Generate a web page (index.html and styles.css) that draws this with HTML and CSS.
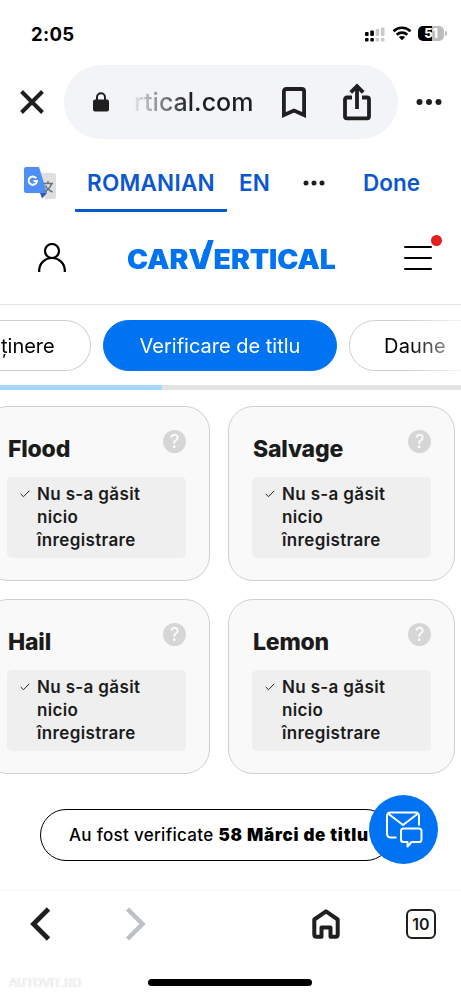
FILE: index.html
```html
<!DOCTYPE html>
<html lang="ro">
<head>
<meta charset="utf-8">
<title>carVertical</title>
<link rel="stylesheet" href="styles.css">
</head>
<body>
<div class="status">
  <span class="time">2:05</span>
  <svg class="signal" width="20" height="16" viewBox="0 0 20 16"><g fill="#000"><rect x="0" y="6" width="3.600" height="4" rx="1"/><rect x="5.300" y="4.400" width="3.600" height="5.600" rx="1"/><rect x="0" y="12" width="3.600" height="3.400" rx="1"/><rect x="5.300" y="12" width="3.600" height="3.400" rx="1"/></g><g fill="#c9c9c9"><rect x="10.600" y="3" width="3.600" height="7" rx="1"/><rect x="15.900" y="1.500" width="3.600" height="8.500" rx="1"/><rect x="10.600" y="12" width="3.600" height="3.400" rx="1"/><rect x="15.900" y="12" width="3.600" height="3.400" rx="1"/></g></svg>
  <svg class="wifi" width="20" height="15" viewBox="0 0 20 15" fill="none" stroke="#000" stroke-width="2.600"><path d="M1.500 5.200C6.200.6 13.800.6 18.500 5.200M4.700 8.700C7.700 5.900 12.300 5.900 15.300 8.700"/><path d="M10 14.300 6.800 11.100Q10 8.700 13.200 11.100Z" fill="#000" stroke="none"/></svg>
  <span class="battery">51</span><i class="nub"></i>
</div>

<div class="browser">
  <svg class="close" width="24" height="24" viewBox="0 0 24 24" fill="none" stroke="#1f1f1f" stroke-width="3.900"><path d="M1.500 1.500 22.500 22.500M22.500 1.500 1.500 22.500"/></svg>
  <div class="address">
    <svg class="lock" width="16" height="20" viewBox="0 0 16 20"><rect y="7.500" width="16" height="12" rx="2" fill="#1f1f1f"/><path d="M4 8V5.200a4 4 0 0 1 8 0V8" fill="none" stroke="#1f1f1f" stroke-width="2"/></svg>
    <span class="domain">rtical.com</span>
    <svg class="bookmark" width="24" height="32" viewBox="0 0 24 32" fill="none" stroke="#1f1f1f" stroke-width="3.800"><path d="M1.900 28V4.500Q1.900 2 4.400 2H19.600Q22.100 2 22.100 4.500V28L12 23.500Z"/></svg>
    <svg class="share" width="28" height="38" viewBox="0 0 28 38" fill="none" stroke="#1f1f1f" stroke-width="3.800"><path d="M9 14.500H4Q2 14.500 2 16.500V33.500Q2 35.300 4 35.300H24Q26 35.300 26 33.500V16.500Q26 14.500 24 14.500H19M14 26V4M7.800 9.300 14 3.100 20.200 9.300"/></svg>
  </div>
  <svg class="more" width="26" height="8" viewBox="0 0 26 8" fill="#1f1f1f"><circle cx="3.500" cy="4" r="3"/><circle cx="13" cy="4" r="3"/><circle cx="22.500" cy="4" r="3"/></svg>
</div>

<div class="translate">
  <svg class="gicon" width="34" height="34" viewBox="0 0 34 34"><path d="M13 6H30Q32 6 32 8V30Q32 32 30 32H21Z" fill="#dfdfdf"/><path d="M16 26H23L18 31.500Z" fill="#3f51b5"/><path d="M2 0H15L23 26H2Q0 26 0 24V2Q0 0 2 0Z" fill="#4f8ef4"/><path d="M12.300 11.300A4.200 4.200 0 1 0 13 14H9.500" fill="none" stroke="#fff" stroke-width="2"/><path d="M19.500 16.500H29M24 14V16.500M27.500 17Q25.500 22 20.500 25M21.500 18.500Q23 22.500 28.500 25" fill="none" stroke="#66747b" stroke-width="1.500"/></svg>
  <span class="lang active">ROMANIAN</span>
  <span class="lang english">EN</span>
  <svg class="dots" width="22" height="6" viewBox="0 0 22 6" fill="#1f1f1f"><circle cx="3" cy="3" r="2.500"/><circle cx="11" cy="3" r="2.500"/><circle cx="19" cy="3" r="2.500"/></svg>
  <span class="done">Done</span>
</div>

<header class="site">
  <svg class="user" width="28" height="30" viewBox="0 0 28 30" fill="none" stroke="#000" stroke-width="2.200"><circle cx="14" cy="8" r="7"/><path d="M1.200 29V27.500a12.800 12.500 0 0 1 25.600 0V29"/></svg>
  <div class="logo"><span class="word">CAR<span class="vee">V</span>ERTICAL</span><svg class="slash" width="20" height="30" viewBox="0 0 20 30"><path d="M13 0H18.700L10 29H3Z" fill="#0073f2"/></svg></div>
  <div class="menu"><i></i><i></i><i></i><b></b></div>
</header>

<nav class="tabs">
  <span class="tab first">ținere</span>
  <span class="tab selected">Verificare de titlu</span>
  <span class="tab last">Daune</span>
</nav>
<div class="progress"><i></i></div>

<main class="cards">
  <section class="card"><div class="head"><h2>Flood</h2><span class="help">?</span></div>
    <div class="result"><svg width="10" height="8" viewBox="0 0 10 8"><path d="M.7 4 3.500 6.700 9.200.8"/></svg><p>Nu s-a găsit<br>nicio<br>înregistrare</p></div></section>
  <section class="card"><div class="head"><h2>Salvage</h2><span class="help">?</span></div>
    <div class="result"><svg width="10" height="8" viewBox="0 0 10 8"><path d="M.7 4 3.500 6.700 9.200.8"/></svg><p>Nu s-a găsit<br>nicio<br>înregistrare</p></div></section>
  <section class="card"><div class="head"><h2>Hail</h2><span class="help">?</span></div>
    <div class="result"><svg width="10" height="8" viewBox="0 0 10 8"><path d="M.7 4 3.500 6.700 9.200.8"/></svg><p>Nu s-a găsit<br>nicio<br>înregistrare</p></div></section>
  <section class="card"><div class="head"><h2>Lemon</h2><span class="help">?</span></div>
    <div class="result"><svg width="10" height="8" viewBox="0 0 10 8"><path d="M.7 4 3.500 6.700 9.200.8"/></svg><p>Nu s-a găsit<br>nicio<br>înregistrare</p></div></section>
</main>

<div class="summary">
  <div class="pill"><span class="checked">Au fost verificate</span><strong>58 Mărci de titlu</strong></div>
  <div class="chat"><svg width="38" height="38" viewBox="0 0 38 38" fill="none" stroke="#fff" stroke-width="2" stroke-linejoin="round"><path d="M11.500 26.500H6Q2 26.500 2 22.500V5Q2 1.500 5.500 1.500H30.500Q34 1.500 34 5V14.500M3 2.500 18 14 33 2.500"/><path d="M18.500 17.500H34Q36.500 17.500 36.500 20V28.500Q36.500 31 34 31H26.500L22.500 35.500V31H18.500Q16 31 16 28.500V20Q16 17.500 18.500 17.500Z"/></svg></div>
</div>

<footer class="toolbar">
  <svg class="back" width="21" height="34" viewBox="0 0 21 34" fill="none" stroke="#1f1f1f" stroke-width="4.800"><path d="M18.500 2 3.500 17 18.500 32"/></svg>
  <svg class="forward" width="21" height="34" viewBox="0 0 21 34" fill="none" stroke="#bdc1c6" stroke-width="4.500"><path d="M2.500 2 17.500 17 2.500 32"/></svg>
  <svg class="home" width="28" height="30" viewBox="0 0 28 30" fill="none" stroke="#1f1f1f" stroke-width="4" stroke-linejoin="round"><path d="M2.300 10.500 14 2.300 25.700 10.500V25.500Q25.700 27.700 23.500 27.700H18.500V18.500H9.500V27.700H4.500Q2.300 27.700 2.300 25.500Z"/></svg>
  <span class="count">10</span>
</footer>
<div class="bottom"><span class="mark">AUTOVIT.RO</span><i class="indicator"></i></div>
</body>
</html>
```
FILE: styles.css
```css
* { box-sizing: border-box; }
body {
  margin: 0;
  width: 461px;
  height: 998px;
  overflow: hidden;
  background: #fff;
  color: #1b1b1b;
  font-family: Inter, "Liberation Sans", sans-serif;
}
svg { display: block; flex: none; }
span, strong { white-space: nowrap; }

.status { display: flex; align-items: center; height: 64px; padding: 3px 14px 0 31px; }
.time { flex: 1; color: #000; font-size: 18.500px; font-weight: 700; letter-spacing: .3px; }
.signal { margin-right: 1px; }
.wifi { margin: 0 6px 1px 6px; }
.battery {
  width: 26px; height: 15px; border-radius: 5px;
  background: linear-gradient(90deg, #000 52%, #bcbcbc 52%);
  color: #fff; font-size: 13px; font-weight: 800; line-height: 15px; text-align: center; letter-spacing: -.3px;
}
.nub { width: 2px; height: 5px; margin-left: 1px; border-radius: 0 2px 2px 0; background: #bcbcbc; }

.browser { display: flex; align-items: center; height: 76px; padding-left: 20px; }
.address {
  display: flex; align-items: center; width: 334px; height: 74px; margin: 0 18px 0 20px;
  padding-left: 29px; border-radius: 37px; background: #f2f4f7;
}
.domain {
  width: 121px; margin-left: 24px; padding-left: 1px; font-size: 25px; font-weight: 500;
  background: linear-gradient(90deg, #e4e6e9, #8b8c8e 22%, #1f1f1f 46%);
  -webkit-background-clip: text; background-clip: text; color: transparent;
}
.bookmark { margin: 2px 0 0 28px; }
.share { margin-left: 37px; }

.translate { display: flex; height: 72px; padding: 27px 0 0 24px; color: #0b57d0; font-size: 22.500px; font-weight: 600; line-height: 32px; }
.lang { letter-spacing: .25px; }
.lang.active { width: 152px; height: 45px; margin-left: 17px; padding-left: 12px; border-bottom: 3px solid #0b57d0; border-radius: 0 0 1px 1px; }
.english { width: 31px; margin-left: 12px; overflow: hidden; }
.dots { margin: 13px 0 0 33px; }
.done { margin-left: 38px; }

.site { display: flex; align-items: center; height: 93px; padding: 0 29px 0 38px; border-bottom: 1px solid #e5e5e5; }
.logo { position: relative; width: 210px; margin-left: 61px; color: #0073f2; }
.word { display: block; padding-top: 2px; font-size: 26.500px; font-weight: 900; line-height: 34px; letter-spacing: -.1px; transform: scaleX(1.07); transform-origin: 0 50%; }
.vee { letter-spacing: 2.500px; }
.slash { position: absolute; left: 68px; top: 0; }
.menu { position: relative; display: grid; gap: 9px; width: 28px; margin-left: 67px; }
.menu i { height: 2px; background: #000; border-radius: 1px; }
.menu b { position: absolute; right: -10px; top: -11px; width: 11px; height: 11px; border-radius: 50%; background: #e32020; }

.tabs {
  display: flex; gap: 12px; height: 80px; padding-top: 15px; overflow: hidden;
  -webkit-mask-image: linear-gradient(90deg, #000 410px, #0000 475px); mask-image: linear-gradient(90deg, #000 410px, #0000 475px);
}
.tab { flex: none; height: 51px; border: 1px solid #d0d0d0; border-radius: 26px; color: #000; font-size: 20px; line-height: 50px; }
.first { width: 91px; padding-left: 1px; border-left: 0; border-radius: 0 26px 26px 0; }
.selected { width: 234px; border-color: #0073f2; background: #0073f2; color: #fff; text-align: center; }
.last { width: 150px; padding-left: 34px; letter-spacing: .2px; }
.progress { height: 5px; background: #e3e3e3; }
.progress i { display: block; width: 162px; height: 5px; background: #a6d8ff; }

.cards { display: grid; grid-template-columns: 227px 227px; gap: 18px; margin: 16px 0 0 -17px; }
.card { height: 175px; padding: 23px 23px 0 23px; border: 1.500px solid #d0d0d0; border-radius: 25px; background: #f9f9f9; }
.head { display: flex; justify-content: space-between; height: 47px; }
h2 { margin: 3px 0 0 1px; font-size: 23px; font-weight: 800; letter-spacing: -.2px; line-height: 32px; }
.help { width: 23px; height: 23px; border-radius: 50%; background: #d6d6d6; color: #fff; font-size: 18px; line-height: 23px; text-align: center; }
.result { display: flex; width: 179px; height: 81px; padding: 6px 0 0 13px; border-radius: 5px; background: #efefef; }
.result svg { margin-top: 7px; fill: none; stroke: #222; stroke-width: 1; }
.result p { margin: 0 0 0 7px; font-size: 17px; font-weight: 570; letter-spacing: .35px; line-height: 23px; white-space: nowrap; }

.summary { position: relative; height: 117px; padding: 35px 0 0 40px; border-bottom: 1px solid #f8f8f8; }
.pill { display: flex; gap: 5px; width: 352px; height: 52px; padding-left: 28px; border: 1.500px solid #000; border-radius: 26px; color: #000; font-size: 17px; line-height: 50px; letter-spacing: .3px; }
.pill .checked { font-weight: 450; }
.pill strong { font-weight: 900; letter-spacing: .75px; }
.chat { position: absolute; left: 369px; top: 21px; display: grid; place-items: center; width: 69px; height: 69px; border-radius: 50%; background: #0073f2; }

.toolbar { display: flex; align-items: center; height: 66px; padding-left: 30px; }
.forward { margin-left: 74px; }
.home { margin-left: 166px; }
.count { width: 30px; height: 30px; margin-left: 66px; border: 2.500px solid #1f1f1f; border-radius: 6px; font-size: 16px; font-weight: 600; line-height: 27px; text-align: center; }
.bottom { display: flex; align-items: center; height: 50px; padding-left: 9px; }
.mark { width: 139px; color: #fff; font-size: 12px; text-shadow: 0 0 1px #aaa; }
.indicator { width: 164px; height: 7px; border-radius: 4px; background: #000; }
```
